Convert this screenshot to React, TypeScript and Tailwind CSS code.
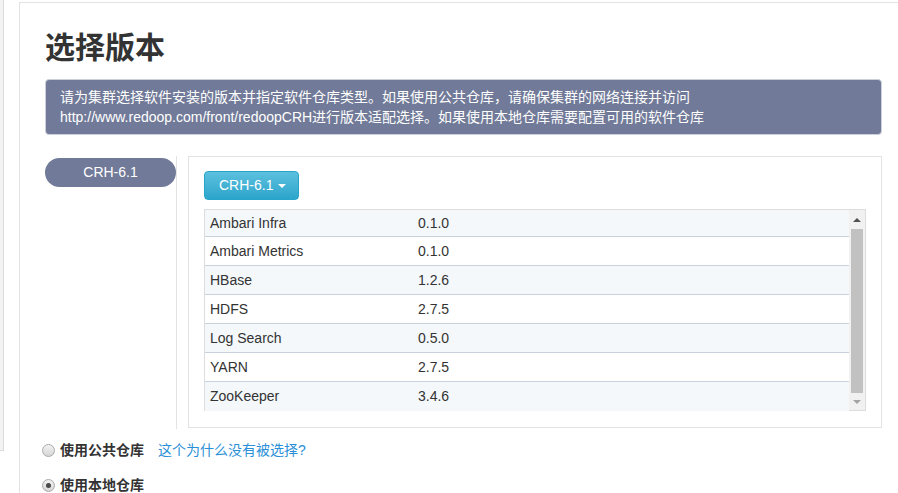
import React from "react";

const rows: [string, string][] = [
  ["Ambari Infra", "0.1.0"],
  ["Ambari Metrics", "0.1.0"],
  ["HBase", "1.2.6"],
  ["HDFS", "2.7.5"],
  ["Log Search", "0.5.0"],
  ["YARN", "2.7.5"],
  ["ZooKeeper", "3.4.6"],
];

function Radio({ checked }: { checked?: boolean }) {
  return (
    <span className="relative inline-block w-[13px] h-[13px] rounded-full border border-[#a9a9a9] bg-gradient-to-b from-[#f2f2f2] to-[#d6d6d6] shrink-0">
      {checked && (
        <span className="absolute left-[3px] top-[3px] w-[5px] h-[5px] rounded-full bg-[#4a4a4a]" />
      )}
    </span>
  );
}

export default function App() {
  const font = { fontFamily: '"Liberation Sans", "Noto Sans CJK SC", sans-serif' };
  return (
    <div className="flex w-[898px] h-[493px] overflow-hidden bg-white text-[#333]" style={font}>
      <div className="w-[4px] h-[451px] bg-[#f3f3f3] border-r border-b border-[#dcdcdc] shrink-0" />
      <div className="ml-[15px] mt-[2px] flex-1 border-l border-t border-[#e3e3e3] pl-[25px] pt-[27px] pr-[16px]">
        <h1 className="text-[30px] leading-[36px] font-bold text-[#333]">选择版本</h1>
        <div className="mt-[13px] h-[56px] rounded-[4px] border border-[#ccd0da] bg-[#717a98] px-[14px] pt-[7px] text-[14px] leading-[20px] text-white">
          <div>请为集群选择软件安装的版本并指定软件仓库类型。如果使用公共仓库，请确保集群的网络连接并访问</div>
          <div>http://www.redoop.com/front/redoopCRH进行版本适配选择。如果使用本地仓库需要配置可用的软件仓库</div>
        </div>
        <div className="mt-[21px] flex h-[273px]">
          <div className="w-[132px] border-r border-[#e3e3e3] pt-[2px]">
            <div className="h-[29px] rounded-full bg-[#717a98] text-white text-[14px] leading-[29px] text-center">
              CRH-6.1
            </div>
          </div>
          <div className="ml-[11px] flex-1 h-[272px] border border-[#e3e3e3] pl-[15px] pr-[15px] pt-[14px]">
            <button className="flex items-center h-[29px] w-[95px] rounded-[4px] border border-[#28a4c9] bg-gradient-to-b from-[#5bc0de] to-[#2aa5cb] pl-[14px] text-white text-[14px]">
              <span>CRH-6.1</span>
              <span className="ml-[5px] inline-block w-0 h-0 border-l-[4px] border-r-[4px] border-t-[4px] border-l-transparent border-r-transparent border-t-white" />
            </button>
            <div className="mt-[9px] flex h-[202px] border border-[#dddddd]">
              <div className="flex-1">
                {rows.map(([n, v], i) => (
                  <div
                    key={n}
                    className={`flex items-center text-[14px] ${i === 0 ? "h-[27px]" : "h-[29px]"} ${i === rows.length - 1 ? "h-[28px]" : "border-b border-[#c9d3dd]"} ${i % 2 === 0 ? "bg-[#f4f8fb]" : "bg-white"}`}
                  >
                    <span className="w-[213px] pl-[5px]">{n}</span>
                    <span>{v}</span>
                  </div>
                ))}
              </div>
              <div className="w-[16px] bg-[#f1f1f1] flex flex-col items-center">
                <div className="h-[19px] flex items-center justify-center">
                  <span className="inline-block w-0 h-0 border-l-[4px] border-r-[4px] border-b-[4px] border-l-transparent border-r-transparent border-b-[#505050]" />
                </div>
                <div className="w-[12px] h-[164px] bg-[#c1c1c1]" />
                <div className="flex-1 flex items-center justify-center">
                  <span className="inline-block w-0 h-0 border-l-[4px] border-r-[4px] border-t-[4px] border-l-transparent border-r-transparent border-t-[#a3a3a3]" />
                </div>
              </div>
            </div>
          </div>
        </div>
        <div className="-ml-[3px] mt-[11px] flex items-center h-[20px] text-[14px]">
          <Radio />
          <span className="ml-[5px] font-bold">使用公共仓库</span>
          <span className="ml-[14px] text-[#2a8fd6]">这个为什么没有被选择?</span>
        </div>
        <div className="-ml-[3px] mt-[15px] flex items-center h-[20px] text-[14px]">
          <Radio checked />
          <span className="ml-[5px] font-bold">使用本地仓库</span>
        </div>
      </div>
    </div>
  );
}
